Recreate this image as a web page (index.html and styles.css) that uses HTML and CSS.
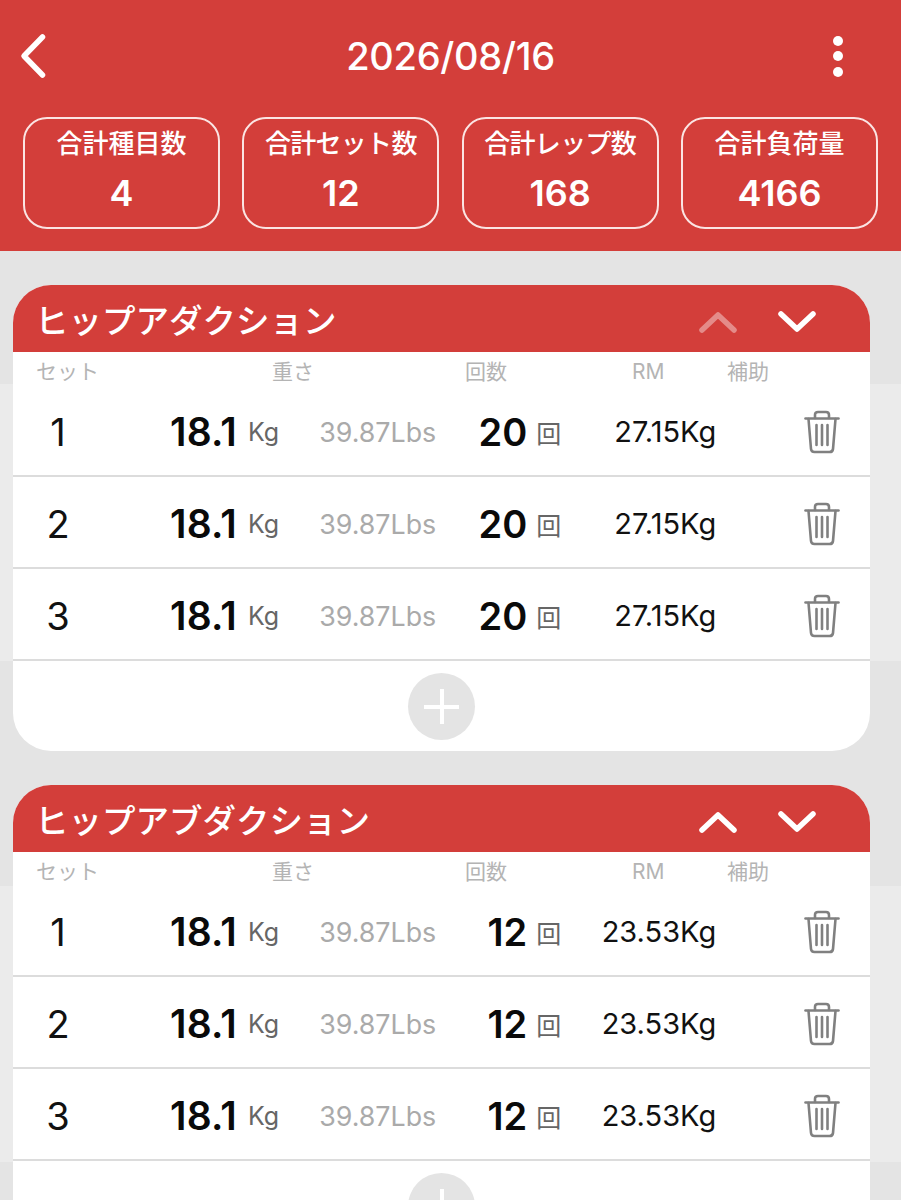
FILE: index.html
```html
<!DOCTYPE html>
<html lang="ja">
<head>
<meta charset="utf-8">
<title>2026/08/16</title>
<link rel="stylesheet" href="styles.css">
</head>
<body>
<div class="page">
<div class="top">
  <div class="nav">
    <svg class="back" width="30" height="46" viewBox="0 0 30 46"><path d="M24.5 4 L6 23 L24.5 42" fill="none" stroke="#fff" stroke-width="5.5" stroke-linecap="round" stroke-linejoin="round"/></svg>
    <div class="date">2026/08/16</div>
    <div class="dots"><i></i><i></i><i></i></div>
  </div>
  <div class="totals">
    <div class="total"><span>合計種目数</span><b>4</b></div>
    <div class="total"><span class="tight">合計セット数</span><b>12</b></div>
    <div class="total"><span class="tight">合計レップ数</span><b>168</b></div>
    <div class="total"><span>合計負荷量</span><b>4166</b></div>
  </div>
</div>

<div class="list">
  <div class="card">
    <div class="card-head">
      <div class="name">ヒップアダクション</div>
      <svg class="arrow off" width="40" height="26" viewBox="0 0 40 26"><path d="M4 21 L20 6 L36 21" fill="none" stroke="#fff" stroke-width="5.5" stroke-linecap="round" stroke-linejoin="round"/></svg>
      <svg class="arrow" width="40" height="26" viewBox="0 0 40 26"><path d="M4 5 L20 20 L36 5" fill="none" stroke="#fff" stroke-width="5.5" stroke-linecap="round" stroke-linejoin="round"/></svg>
    </div>
    <div class="labels"><span class="l-set">セット</span><span class="l-kg">重さ</span><span class="l-rep">回数</span><span class="l-rm">RM</span><span class="l-help">補助</span></div>
    <div class="row">
      <span class="c-set">1</span><span class="c-kg">18.1</span><span class="unit">Kg</span><span class="c-lbs">39.87Lbs</span><span class="c-rep">20</span><span class="unit">回</span><span class="c-rm">27.15Kg</span>
      <svg class="trash" width="36" height="44" viewBox="0 0 36 44"><use href="#trash"/></svg>
    </div>
    <div class="row">
      <span class="c-set">2</span><span class="c-kg">18.1</span><span class="unit">Kg</span><span class="c-lbs">39.87Lbs</span><span class="c-rep">20</span><span class="unit">回</span><span class="c-rm">27.15Kg</span>
      <svg class="trash" width="36" height="44" viewBox="0 0 36 44"><use href="#trash"/></svg>
    </div>
    <div class="row">
      <span class="c-set">3</span><span class="c-kg">18.1</span><span class="unit">Kg</span><span class="c-lbs">39.87Lbs</span><span class="c-rep">20</span><span class="unit">回</span><span class="c-rm">27.15Kg</span>
      <svg class="trash" width="36" height="44" viewBox="0 0 36 44"><use href="#trash"/></svg>
    </div>
    <div class="add-row"><div class="add"></div></div>
  </div>

  <div class="card">
    <div class="card-head">
      <div class="name">ヒップアブダクション</div>
      <svg class="arrow" width="40" height="26" viewBox="0 0 40 26"><path d="M4 21 L20 6 L36 21" fill="none" stroke="#fff" stroke-width="5.5" stroke-linecap="round" stroke-linejoin="round"/></svg>
      <svg class="arrow" width="40" height="26" viewBox="0 0 40 26"><path d="M4 5 L20 20 L36 5" fill="none" stroke="#fff" stroke-width="5.5" stroke-linecap="round" stroke-linejoin="round"/></svg>
    </div>
    <div class="labels"><span class="l-set">セット</span><span class="l-kg">重さ</span><span class="l-rep">回数</span><span class="l-rm">RM</span><span class="l-help">補助</span></div>
    <div class="row">
      <span class="c-set">1</span><span class="c-kg">18.1</span><span class="unit">Kg</span><span class="c-lbs">39.87Lbs</span><span class="c-rep">12</span><span class="unit">回</span><span class="c-rm">23.53Kg</span>
      <svg class="trash" width="36" height="44" viewBox="0 0 36 44"><use href="#trash"/></svg>
    </div>
    <div class="row">
      <span class="c-set">2</span><span class="c-kg">18.1</span><span class="unit">Kg</span><span class="c-lbs">39.87Lbs</span><span class="c-rep">12</span><span class="unit">回</span><span class="c-rm">23.53Kg</span>
      <svg class="trash" width="36" height="44" viewBox="0 0 36 44"><use href="#trash"/></svg>
    </div>
    <div class="row">
      <span class="c-set">3</span><span class="c-kg">18.1</span><span class="unit">Kg</span><span class="c-lbs">39.87Lbs</span><span class="c-rep">12</span><span class="unit">回</span><span class="c-rm">23.53Kg</span>
      <svg class="trash" width="36" height="44" viewBox="0 0 36 44"><use href="#trash"/></svg>
    </div>
    <div class="add-row"><div class="add"></div></div>
  </div>
</div>
</div>

<svg class="defs" width="0" height="0">
  <symbol id="trash" viewBox="0 0 36 44">
    <g fill="none" stroke="#808080" stroke-width="2.6" stroke-linecap="round" stroke-linejoin="round">
      <path d="M1.5 8.5 H34.5"/>
      <path d="M11 8 V5 Q11 2 14 2 H22 Q25 2 25 5 V8"/>
      <path d="M4.5 9 L7 39 Q7.3 42 10.5 42 H25.5 Q28.7 42 29 39 L31.5 9"/>
      <path d="M12.5 15 V35 M18 15 V35 M23.5 15 V35"/>
    </g>
  </symbol>
</svg>
</body>
</html>
```

FILE: styles.css
```css
html,body{
margin:0;padding:0;
}
body{
background:#e4e4e4;
font-family:"Inter","Noto Sans CJK JP",sans-serif;
}
.page{
height:1200px;
overflow:hidden;
}
.defs{
position:absolute;
}
.top{
background:#d33e3a;
height:251px;
box-sizing:border-box;
padding:33px 23px 0;
color:#fff;
}
.nav{
display:grid;
grid-template-columns:1fr auto 1fr;
align-items:center;
height:46px;
margin-bottom:38px;
}
.back{
margin-left:-5px;
}
.date{
font-size:38px;
font-weight:500;
letter-spacing:-.3px;
}
.dots{
display:flex;
flex-direction:column;
gap:5.5px;
justify-self:end;
margin-right:35px;
}
.dots i{
display:block;
width:10px;height:10px;
border-radius:50%;
background:#fff;
}
.totals{
display:flex;
justify-content:space-between;
}
.total{
width:197px;height:112px;
box-sizing:border-box;
border:2px solid #fbe4e3;
border-radius:24px;
display:flex;
flex-direction:column;
align-items:center;
padding-top:8px;
}
.total span{
font-size:26px;
font-weight:500;
line-height:34px;
}
.total .tight{
letter-spacing:-.7px;
}
.total b{
font-size:36px;
font-weight:600;
line-height:44px;
margin-top:10px;
}
.list{
padding:34px 31px 0 13px;
background:linear-gradient(#e4e4e4 133px,#ebebeb 133px,#ebebeb 410px,#e4e4e4 410px,#e4e4e4 635px,#ebebeb 635px,#ebebeb 911px,#e4e4e4 911px);
}
.card{
background:#fff;
border-radius:38px;
overflow:hidden;
margin-bottom:34px;
}
.card-head{
background:#d33e3a;
height:67px;
display:flex;
align-items:center;
padding:0 53px 0 22px;
color:#fff;
}
.name{
font-size:33.5px;
font-weight:500;
flex:1;
}
.arrow{
margin:6px 0 0 39px;
}
.arrow.off{
opacity:.4;
}
.labels{
position:relative;
height:33px;
font-size:21px;
color:#b4b4b4;
line-height:40px;
}
.labels span{
position:absolute;
top:0;
}
.l-set{left:23px;}
.l-kg{left:259px;}
.l-rep{left:452px;}
.l-rm{left:619px;}
.l-help{left:714px;}
.row{
display:flex;
align-items:center;
height:92px;
box-sizing:border-box;
padding:3px 30px 0 0;
border-bottom:2px solid #dcdcdc;
}
.c-set{
width:34px;
margin-left:28px;
text-align:center;
font-size:38px;
color:#111;
}
.c-kg{
margin-left:95px;
width:68px;
font-size:39px;
font-weight:600;
letter-spacing:.2px;
color:#0a0a0a;
}
.unit{
font-size:25px;
color:#666;
margin-left:10px;
}
.c-lbs{
font-size:26.8px;
color:#aaa;
margin-left:40px;
}
.c-rep{
width:96px;
text-align:right;
font-size:38px;
font-weight:600;
color:#0a0a0a;
margin:0 -1px 0 -5px;
}
.c-rm{
width:155px;
text-align:right;
font-size:29px;
color:#111;
}
.trash{
margin-left:auto;
}
.add-row{
height:90px;
display:flex;
justify-content:center;
padding-top:12px;
box-sizing:border-box;
}
.add{
position:relative;
width:67px;height:67px;
border-radius:50%;
background:#e4e4e4;
}
.add:before,.add:after{
content:"";
position:absolute;
background:#fff;
}
.add:before{
left:16px;right:16px;top:31.5px;height:4px;
}
.add:after{
top:16px;bottom:16px;left:31.5px;width:4px;
}
```
